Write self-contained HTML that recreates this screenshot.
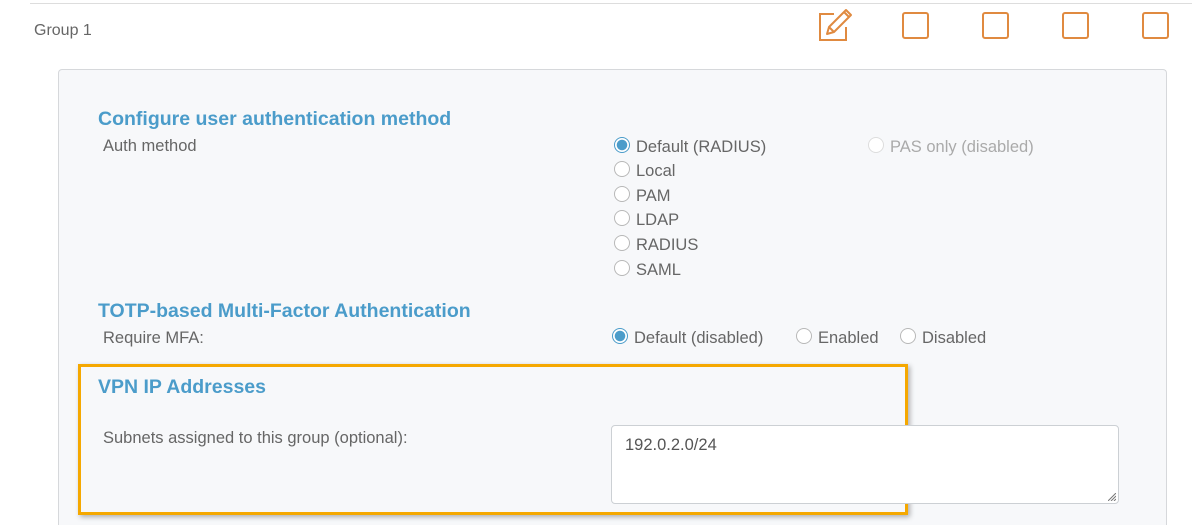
<!DOCTYPE html>
<html style="height:525px;overflow:hidden"><head><style>
html,body{height:525px;overflow:hidden}
body{margin:0;width:1192px;background:#fff;font-family:"Liberation Sans",sans-serif;color:#666;position:relative}
.a{position:absolute;white-space:nowrap}
.line{position:absolute;left:30px;right:0;top:3px;height:1px;background:#ddd}
.sq{position:absolute;top:12px;width:27px;height:27px;border:2px solid #e08a40;border-radius:3px;box-sizing:border-box}
.panel{position:absolute;left:58px;top:69px;width:1109px;height:457px;background:#f7f8fa;border:1px solid #d6d8db;border-bottom:none;border-radius:4px 4px 0 0;box-sizing:border-box}
h2{position:absolute;margin:0;font-size:19.5px;font-weight:bold;color:#4b9cca;white-space:nowrap}
.lbl{position:absolute;font-size:16.5px;color:#666;white-space:nowrap}
.r{position:absolute;width:16px;height:16px;border:1px solid #b8b8b8;border-radius:50%;background:#fff;box-sizing:border-box}
.r.on{border-color:#4b9cca;background:radial-gradient(circle,#4b9cca 0 5px,#fff 5.5px)}
.r.dis{border-color:#ddd}
.orange{position:absolute;left:78px;top:364px;width:830px;height:151px;border:3px solid #f5a800;box-sizing:border-box;box-shadow:2px 2px 5px rgba(0,0,0,.3)}
.ta{position:absolute;left:611px;top:425px;width:508px;height:79px;background:#fff;border:1px solid #ccd0d4;border-radius:4px;box-sizing:border-box}
</style></head><body>
<div class="line"></div>
<div class="a" style="left:34px;top:22px;font-size:16px;color:#666">Group 1</div>
<svg class="a" style="left:818px;top:8px" width="40" height="34" viewBox="0 0 40 34"><path d="M16 6H2v26h26V19" fill="none" stroke="#e08a40" stroke-width="2"/><path d="M9 26l2-7L28 2l5 5L16 24z M26 4l5 5 M11 19l5 5" fill="none" stroke="#e08a40" stroke-width="2" stroke-linejoin="round"/></svg>
<div class="sq" style="left:902px"></div>
<div class="sq" style="left:982px"></div>
<div class="sq" style="left:1062px"></div>
<div class="sq" style="left:1142px"></div>
<div class="panel"></div>
<h2 style="left:98px;top:108px">Configure user authentication method</h2>
<div class="lbl" style="left:103px;top:137px">Auth method</div>
<div class="r on" style="left:614px;top:137px"></div><div class="lbl" style="left:636px;top:138px">Default (RADIUS)</div>
<div class="r dis" style="left:868px;top:137px"></div><div class="lbl" style="left:890px;top:138px;color:#aaa">PAS only (disabled)</div>
<div class="r" style="left:614px;top:161px"></div><div class="lbl" style="left:636px;top:162px">Local</div>
<div class="r" style="left:614px;top:186px"></div><div class="lbl" style="left:636px;top:187px">PAM</div>
<div class="r" style="left:614px;top:210px"></div><div class="lbl" style="left:636px;top:211px">LDAP</div>
<div class="r" style="left:614px;top:235px"></div><div class="lbl" style="left:636px;top:236px">RADIUS</div>
<div class="r" style="left:614px;top:260px"></div><div class="lbl" style="left:636px;top:261px">SAML</div>
<h2 style="left:98px;top:300px">TOTP-based Multi-Factor Authentication</h2>
<div class="lbl" style="left:103px;top:329px">Require MFA:</div>
<div class="r on" style="left:612px;top:328px"></div><div class="lbl" style="left:634px;top:329px">Default (disabled)</div>
<div class="r" style="left:796px;top:328px"></div><div class="lbl" style="left:818px;top:329px">Enabled</div>
<div class="r" style="left:900px;top:328px"></div><div class="lbl" style="left:922px;top:329px">Disabled</div>
<div class="orange"></div>
<h2 style="left:98px;top:376px">VPN IP Addresses</h2>
<div class="lbl" style="left:103px;top:429px">Subnets assigned to this group (optional):</div>
<div class="ta"><div class="lbl" style="left:13px;top:10px;color:#555">192.0.2.0/24</div>
<svg style="position:absolute;right:2px;bottom:2px" width="8" height="8"><path d="M0 8L8 0M3 8L8 3M6 8L8 6" stroke="#777" stroke-width="1"/></svg></div>
</body></html>
